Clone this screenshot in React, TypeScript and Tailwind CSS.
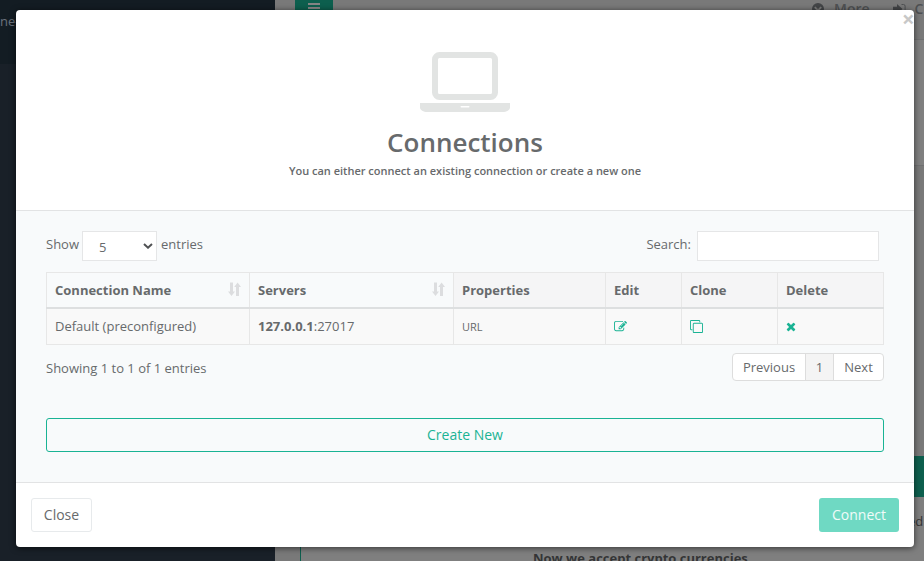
import React from 'react';

function Laptop() {
  return (
    <svg className="block h-[60px] w-[90px]" viewBox="0 0 90 60" fill="#e2e4e3">
      <path
        fillRule="evenodd"
        d="M19.5 0h51a7.5 7.5 0 0 1 7.5 7.5v33a7.5 7.5 0 0 1-7.5 7.5h-51a7.5 7.5 0 0 1-7.5-7.5v-33A7.5 7.5 0 0 1 19.500 0zM19.500 6a1.500 1.500 0 0 0-1.500 1.500v33a1.500 1.500 0 0 0 1.500 1.500h51a1.500 1.500 0 0 0 1.500-1.500v-33a1.500 1.500 0 0 0-1.500-1.500z"
      />
      <path
        fillRule="evenodd"
        d="M0 51h90v4.500c0 2.500-3.400 4.500-7.500 4.500h-75C3.400 60 0 58 0 55.500zM41.250 54a.75.75 0 0 0 0 1.500h7.500a.75.75 0 0 0 0-1.500z"
      />
    </svg>
  );
}

function SortIcon() {
  return (
    <svg className="-mt-0.5 h-[15px] w-[13px]" viewBox="0 0 13 15" fill="#dcdddf">
      <path d="M2 0.500h3v9h2L3.500 14 0 9.500h2z" />
      <path d="M8 14V5H6.200L9.600 0.500 13 5h-2v9z" />
    </svg>
  );
}

function EditIcon() {
  return (
    <svg className="h-[13px] w-[13px]" viewBox="0 0 1792 1792" fill="#1ab394">
      <path d="M888 1184l116-116-152-152-116 116v56h96v96h56zm440-720q-16-16-33 1l-350 350q-17 17-1 33t33-1l350-350q17-17 1-33zm80 594v190q0 119-84.500 203.500t-203.500 84.500h-832q-119 0-203.500-84.500t-84.500-203.500v-832q0-119 84.500-203.500t203.500-84.500h832q63 0 117 25 15 7 18 23 3 17-9 29l-49 49q-14 14-32 8-23-6-45-6h-832q-66 0-113 47t-47 113v832q0 66 47 113t113 47h832q66 0 113-47t47-113v-126q0-13 9-22l64-64q15-15 35-7t20 29zm-96-738l288 288-672 672h-288v-288zm444 132l-92 92-288-288 92-92q28-28 68-28t68 28l152 152q28 28 28 68t-28 68z" />
    </svg>
  );
}

function CloneIcon() {
  return (
    <svg className="h-[13px] w-[13px]" viewBox="0 0 1792 1792" fill="#1ab394">
      <path d="M1664 1632v-1088q0-13-9.500-22.500t-22.500-9.500h-1088q-13 0-22.500 9.500t-9.500 22.500v1088q0 13 9.500 22.500t22.500 9.500h1088q13 0 22.500-9.500t9.500-22.500zm128-1088v1088q0 66-47 113t-113 47h-1088q-66 0-113-47t-47-113v-1088q0-66 47-113t113-47h1088q66 0 113 47t47 113zm-384-384v160h-128v-160q0-13-9.500-22.500t-22.500-9.500h-1088q-13 0-22.500 9.500t-9.500 22.500v1088q0 13 9.500 22.500t22.500 9.500h160v128h-160q-66 0-113-47t-47-113v-1088q0-66 47-113t113-47h1088q66 0 113 47t47 113z" />
    </svg>
  );
}

function TimesIcon() {
  return (
    <svg className="h-[13px] w-[10px]" viewBox="192 0 1408 1792" fill="#1ab394">
      <path d="M1490 1322q0 40-28 68l-136 136q-28 28-68 28t-68-28l-294-294-294 294q-28 28-68 28t-68-28l-136-136q-28-28-28-68t28-68l294-294-294-294q-28-28-28-68t28-68l136-136q28-28 68-28t68 28l294 294 294-294q28-28 68-28t68 28l136 136q28 28 28 68t-28 68l-294 294 294 294q28 28 28 68z" />
    </svg>
  );
}

function Backdrop() {
  return (
    <div className="flex h-full w-full">
      <aside className="flex w-[275px] shrink-0 flex-col bg-[#192028]">
        <div className="h-16 bg-[#131c23] pt-3 text-[13px] leading-[18px] text-[#6b727c]">ne-</div>
      </aside>
      <main className="flex min-w-0 grow flex-col bg-[#797979]">
        <header className="flex h-10 shrink-0 items-start border-b border-[#707172] pl-5 text-sm font-semibold leading-[18px] text-[#4e5052]">
          <div className="flex h-[21px] w-[38px] justify-center bg-[#0d5f4e] pt-[3px]">
            <svg className="h-3 w-3" viewBox="0 0 12 12" fill="#858585">
              <path d="M0 0h12v2H0zM0 4h12v2H0zM0 8h12v2H0z" />
            </svg>
          </div>
          <svg className="ml-[479px] mt-[3px] h-3 w-3" viewBox="0 0 12 12">
            <circle cx="6" cy="6" r="6" fill="#434547" />
            <path d="M2.800 4.200 6 7.400l3.200-3.200" fill="none" stroke="#797979" strokeWidth="1.900" />
          </svg>
          <span className="ml-[10px]">More</span>
          <svg className="ml-[23px] mt-[3px] h-3 w-[13px]" viewBox="0 0 13 12">
            <path d="M0 3.800h4V1l5.500 5L4 11V8.200H0z" fill="#434547" />
            <path d="M8.500 1.500h2q1.600 0 1.600 1.600v5.800q0 1.600-1.600 1.600h-2" fill="none" stroke="#4e5052" />
          </svg>
          <span className="ml-[9px] whitespace-nowrap">C</span>
        </header>
        <div className="h-[126px] shrink-0 border-b border-[#707172] bg-[#808080]" />
        <div className="h-[290px] shrink-0" />
        <div className="h-[41px] shrink-0 bg-[#0d5f4e]" />
        <div className="ml-[25px] grow border-l border-[#0d5f4e] bg-[#7f7f7f]" />
      </main>
    </div>
  );
}

const TH = 'border border-[#e7e7e7] border-b-2 border-b-[#dddfe0] px-2 pt-0.5 text-left font-bold';
const TD = 'border border-[#e7e7e7] px-2';

export default function App() {
  return (
    <div className="relative h-[561px] w-[924px] overflow-hidden font-['Open_Sans',sans-serif] text-[13px] text-[#676a6c]">
      <Backdrop />
      <div className="absolute left-[908px] top-[512px] whitespace-nowrap text-[13px] leading-[18px] text-[#343536]">ed</div>
      <div className="absolute left-[533px] top-[549px] whitespace-nowrap text-[13px] font-bold leading-[18px] text-[#343536]">
        Now we accept crypto currencies
      </div>

      <div
        role="dialog"
        className="absolute left-4 top-[10px] flex h-[537px] w-[898px] flex-col rounded bg-white shadow-[0_1px_6px_rgba(0,0,0,0.6)]"
      >
        <header className="relative flex h-[201px] shrink-0 flex-col items-center border-b border-[#e2e3e4] pt-[42px]">
          <button className="absolute right-0 top-0 h-4 w-3 text-[22px] font-bold leading-[17px] text-[#c8c8c8]">×</button>
          <Laptop />
          <h4 className="mt-[16px] text-[26px] font-semibold leading-[29px]">Connections</h4>
          <small className="mt-[6px] text-[11px] font-semibold leading-4">
            You can either connect an existing connection or create a new one
          </small>
        </header>

        <section className="h-[272px] shrink-0 border-b border-[#e2e3e4] bg-[#f8fafb] px-[30px] pt-5">
          <div className="flex h-[30px] justify-between pr-[5px]">
            <label className="flex">
              <span className="w-9 pt-1 leading-[18px]">Show</span>
              <span className="flex h-[30px] w-[75px] items-center justify-between border border-[#e5e6e7] bg-white pl-4 pr-[3px]">
                <span className="pt-0.5 leading-[18px]">5</span>
                <svg className="h-[6px] w-[10px]" viewBox="0 0 10 6">
                  <path d="M1 1 5 4.700 9 1" fill="none" stroke="#4f5153" strokeWidth="2" />
                </svg>
              </span>
              <span className="ml-1 pt-1 leading-[18px]">entries</span>
            </label>
            <label className="flex">
              <span className="pt-1 leading-[18px]">Search:</span>
              <input className="ml-[6px] h-[30px] w-[182px] border border-[#e5e6e7] bg-white px-2" />
            </label>
          </div>

          <table className="mt-[11px] w-[838px] table-fixed border-collapse">
            <colgroup>
              <col className="w-[203px]" />
              <col className="w-[204px]" />
              <col className="w-[152px]" />
              <col className="w-[76px]" />
              <col className="w-[96px]" />
              <col />
            </colgroup>
            <thead>
              <tr className="h-[35px]">
                <th className={TH}>
                  <div className="flex items-center justify-between">
                    Connection Name <SortIcon />
                  </div>
                </th>
                <th className={TH}>
                  <div className="flex items-center justify-between">
                    Servers <SortIcon />
                  </div>
                </th>
                <th className={`${TH} bg-[#f5f5f6]`}>Properties</th>
                <th className={`${TH} bg-[#f5f5f6]`}>Edit</th>
                <th className={`${TH} bg-[#f5f5f6]`}>Clone</th>
                <th className={`${TH} bg-[#f5f5f6]`}>Delete</th>
              </tr>
            </thead>
            <tbody>
              <tr className="h-[37px] bg-[#f9f9f9]">
                <td className={TD}>Default (preconfigured)</td>
                <td className={TD}>
                  <b>127.0.0.1</b>:27017
                </td>
                <td className={`${TD} pt-0.5 text-[11px]`}>URL</td>
                <td className={TD}><EditIcon /></td>
                <td className={TD}><CloneIcon /></td>
                <td className={TD}><TimesIcon /></td>
              </tr>
            </tbody>
          </table>

          <div className="mt-2 flex h-7 justify-between">
            <span className="pt-[6px] leading-[18px]">Showing 1 to 1 of 1 entries</span>
            <nav className="flex h-7 overflow-hidden rounded border border-[#dddddd] bg-white leading-[26px]">
              <a className="w-[72px] text-center">Previous</a>
              <a className="w-[29px] border-x border-[#dddddd] bg-[#f4f4f4] text-center">1</a>
              <a className="w-[49px] text-center">Next</a>
            </nav>
          </div>

          <button className="mt-[37px] block h-[34px] w-full rounded-[3px] border border-[#1ab394] text-sm leading-5 text-[#1ab394]">
            Create New
          </button>
        </section>

        <footer className="flex grow items-center justify-between px-[15px]">
          <button className="h-[34px] w-[61px] rounded-[3px] border border-[#e7eaec] bg-white text-sm leading-5">Close</button>
          <button className="h-[34px] w-20 rounded-[3px] bg-[#6fd9c3] text-sm leading-5 text-white/90">Connect</button>
        </footer>
      </div>
    </div>
  );
}
